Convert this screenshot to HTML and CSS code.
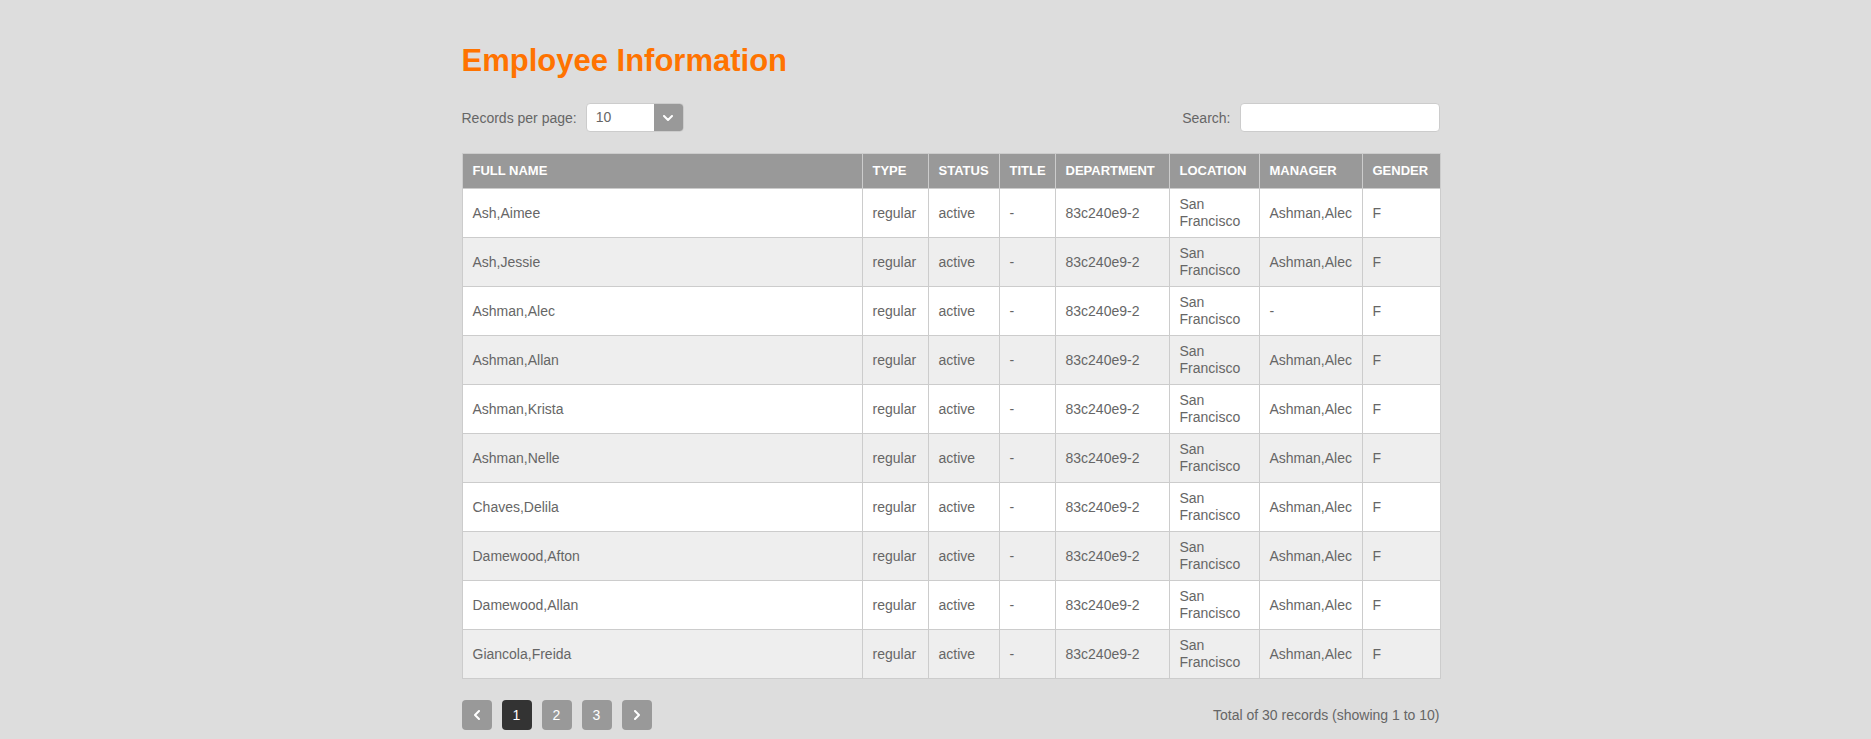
FILE: index.html
```html
<!DOCTYPE html>
<html lang="en">
<head>
<meta charset="utf-8">
<title>Employee Information</title>
<link rel="stylesheet" href="styles.css">
</head>
<body>
<div class="page">
  <h1 class="title">Employee Information</h1>

  <div class="toolbar">
    <div class="per-page">
      <span class="label">Records per page:</span>
      <div class="select">
        <span class="select-value">10</span>
        <span class="select-btn">
          <svg width="10" height="6" viewBox="0 0 10 6"><path d="M1 1l4 4 4-4" fill="none" stroke="#fff" stroke-width="2" stroke-linecap="round" stroke-linejoin="round"/></svg>
        </span>
      </div>
    </div>
    <div class="search">
      <span class="label">Search:</span>
      <input class="search-input" type="text">
    </div>
  </div>

  <table class="grid">
    <colgroup>
      <col class="c-name"><col class="c-type"><col class="c-status"><col class="c-title"><col class="c-dept"><col class="c-loc"><col class="c-mgr"><col class="c-gender">
    </colgroup>
    <thead>
      <tr><th>Full Name</th><th>Type</th><th>Status</th><th>Title</th><th>Department</th><th>Location</th><th>Manager</th><th>Gender</th></tr>
    </thead>
    <tbody>
      <tr><td>Ash,Aimee</td><td>regular</td><td>active</td><td>-</td><td>83c240e9-2</td><td>San Francisco</td><td>Ashman,Alec</td><td>F</td></tr>
      <tr><td>Ash,Jessie</td><td>regular</td><td>active</td><td>-</td><td>83c240e9-2</td><td>San Francisco</td><td>Ashman,Alec</td><td>F</td></tr>
      <tr><td>Ashman,Alec</td><td>regular</td><td>active</td><td>-</td><td>83c240e9-2</td><td>San Francisco</td><td>-</td><td>F</td></tr>
      <tr><td>Ashman,Allan</td><td>regular</td><td>active</td><td>-</td><td>83c240e9-2</td><td>San Francisco</td><td>Ashman,Alec</td><td>F</td></tr>
      <tr><td>Ashman,Krista</td><td>regular</td><td>active</td><td>-</td><td>83c240e9-2</td><td>San Francisco</td><td>Ashman,Alec</td><td>F</td></tr>
      <tr><td>Ashman,Nelle</td><td>regular</td><td>active</td><td>-</td><td>83c240e9-2</td><td>San Francisco</td><td>Ashman,Alec</td><td>F</td></tr>
      <tr><td>Chaves,Delila</td><td>regular</td><td>active</td><td>-</td><td>83c240e9-2</td><td>San Francisco</td><td>Ashman,Alec</td><td>F</td></tr>
      <tr><td>Damewood,Afton</td><td>regular</td><td>active</td><td>-</td><td>83c240e9-2</td><td>San Francisco</td><td>Ashman,Alec</td><td>F</td></tr>
      <tr><td>Damewood,Allan</td><td>regular</td><td>active</td><td>-</td><td>83c240e9-2</td><td>San Francisco</td><td>Ashman,Alec</td><td>F</td></tr>
      <tr><td>Giancola,Freida</td><td>regular</td><td>active</td><td>-</td><td>83c240e9-2</td><td>San Francisco</td><td>Ashman,Alec</td><td>F</td></tr>
    </tbody>
  </table>

  <div class="footer">
    <div class="pager">
      <span class="pg">
        <svg width="6" height="10" viewBox="0 0 6 10"><path d="M5 1L1 5l4 4" fill="none" stroke="#fff" stroke-width="2" stroke-linecap="round" stroke-linejoin="round"/></svg>
      </span>
      <span class="pg active">1</span>
      <span class="pg">2</span>
      <span class="pg">3</span>
      <span class="pg">
        <svg width="6" height="10" viewBox="0 0 6 10"><path d="M1 1l4 4-4 4" fill="none" stroke="#fff" stroke-width="2" stroke-linecap="round" stroke-linejoin="round"/></svg>
      </span>
    </div>
    <div class="total">Total of 30 records (showing 1 to 10)</div>
  </div>
</div>
</body>
</html>
```

FILE: styles.css
```css
html, body {
  margin: 0;
  padding: 0;
  background: #dddddd;
}

body {
  font-family: "Liberation Sans", Arial, sans-serif;
  font-size: 14px;
  color: #666666;
  padding-left: 30px;
}

.page {
  width: 978px;
  margin: 0 auto;
}

.title {
  margin: 41px 0 0;
  font-size: 31px;
  line-height: 40px;
  font-weight: bold;
  color: #ff7300;
}

.toolbar {
  margin-top: 22px;
  display: flex;
  justify-content: space-between;
  align-items: center;
  height: 29px;
}

.per-page, .search {
  display: flex;
  align-items: center;
  gap: 9px;
}

.label {
  color: #666666;
  font-size: 14px;
}

.select {
  display: flex;
  width: 98px;
  height: 29px;
  box-sizing: border-box;
  border-radius: 4px;
  overflow: hidden;
  background: #ffffff;
  border: 1px solid #cccccc;
}

.select-value {
  flex: 1;
  padding-left: 9px;
  line-height: 27px;
  color: #666666;
}

.select-btn {
  width: 29px;
  background: #999999;
  display: flex;
  align-items: center;
  justify-content: center;
}

.search-input {
  width: 200px;
  height: 29px;
  box-sizing: border-box;
  border: 1px solid #cccccc;
  border-radius: 4px;
  background: #ffffff;
  outline: none;
  margin: 0;
}

.grid {
  margin-top: 21px;
  width: 978px;
  border-collapse: collapse;
  table-layout: fixed;
  border: 1px solid #cccccc;
}

.c-name { width: 400px; }
.c-type { width: 66px; }
.c-status { width: 71px; }
.c-title { width: 56px; }
.c-dept { width: 114px; }
.c-loc { width: 90px; }
.c-mgr { width: 103px; }
.c-gender { width: 78px; }

.grid th {
  background: #999999;
  color: #ffffff;
  font-size: 13px;
  font-weight: bold;
  text-transform: uppercase;
  text-align: left;
  line-height: 16px;
  padding: 9px 10px;
  border: 1px solid #cccccc;
  border-top: none;
}

.grid td {
  text-align: left;
  vertical-align: middle;
  line-height: 17px;
  height: 34px;
  padding: 7px 10px;
  border: 1px solid #cccccc;
  color: #666666;
  font-size: 14px;
}

.grid tbody tr:nth-child(odd) td {
  background: #ffffff;
}

.grid tbody tr:nth-child(even) td {
  background: #eeeeee;
}

.footer {
  margin-top: 21px;
  display: flex;
  justify-content: space-between;
  align-items: center;
}

.pager {
  display: flex;
  gap: 10px;
}

.pg {
  width: 30px;
  height: 30px;
  border-radius: 4px;
  background: #999999;
  color: #ffffff;
  display: flex;
  align-items: center;
  justify-content: center;
  font-size: 14px;
}

.pg.active {
  background: #333333;
}

.total {
  color: #666666;
  font-size: 14px;
}
```
